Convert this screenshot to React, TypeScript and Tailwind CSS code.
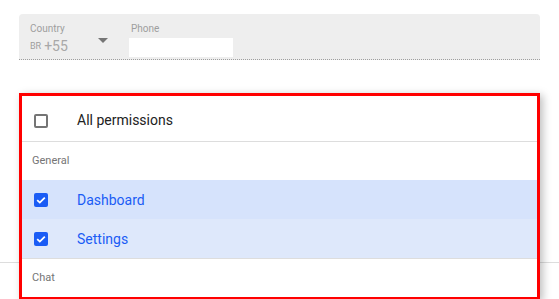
import React from 'react';

const CheckBox = ({ checked }: { checked: boolean }) =>
    checked ? (
        <span className="flex h-[14px] w-[14px] items-center justify-center rounded-[2px] bg-[#1a5cf5]">
            <svg viewBox="0 0 14 14" className="h-[14px] w-[14px]">
                <path d="M3.2 7.2 L5.8 9.6 L10.8 4.6" fill="none" stroke="#fff" strokeWidth="1.8" />
            </svg>
        </span>
    ) : (
        <span className="block h-[14px] w-[14px] rounded-[2px] border-2 border-[#757575] bg-white" />
    );

const Row = ({ label, checked, bg }: { label: string; checked: boolean; bg: string }) => (
    <div className={`flex h-[39px] items-center pt-[1px] ${bg}`}>
        <div className="ml-[12px]">
            <CheckBox checked={checked} />
        </div>
        <span className={`ml-[29px] text-[14px] ${checked ? 'text-[#1a5cf5]' : 'text-[#222]'}`}>{label}</span>
    </div>
);

export default function App() {
    return (
        <div className="relative h-[299px] w-[559px] overflow-hidden bg-white" style={{ fontFamily: 'Roboto, Arial, sans-serif' }}>
            <div className="px-[19px] pt-[14px]">
                <div className="flex h-[46px] rounded-t-[4px] border-b border-dotted border-[#9e9e9e] bg-[#eeeeee] pl-[11px]">
                    <div className="flex w-[99px] flex-col pt-[9px]">
                        <span className="text-[10px] leading-[12px] text-[#9e9e9e]">Country</span>
                        <div className="mt-[3px] flex items-center">
                            <span className="text-[9px] leading-[16px] text-[#9e9e9e]">BR</span>
                            <span className="ml-[3px] text-[14px] leading-[16px] text-[#a8a8a8]">+55</span>
                            <svg viewBox="0 0 10 5" className="ml-[30px] -mt-[12px] h-[5px] w-[10px]">
                                <path d="M0 0 L10 0 L5 5 Z" fill="#757575" />
                            </svg>
                        </div>
                    </div>
                    <div className="flex flex-col pt-[9px]">
                        <span className="ml-[2px] text-[10px] leading-[12px] text-[#9e9e9e]">Phone</span>
                        <div className="mt-[3px] h-[19px] w-[104px] bg-white" />
                    </div>
                </div>
            </div>
            <div className="mt-[202px] border-b border-[#dddddd]" />

            <div className="absolute left-[19px] top-[93px] w-[521px] border-[3px] border-[#ff0000] bg-white shadow-[3px_2px_8px_rgba(0,0,0,0.25)]">
                <div className="flex h-[46px] items-center border-b border-[#dddddd] pt-[4px]">
                    <div className="ml-[12px]">
                        <CheckBox checked={false} />
                    </div>
                    <span className="ml-[29px] text-[14px] text-[#222]">All permissions</span>
                </div>
                <div className="flex h-[38px] items-center pl-[10px] pt-[1px] text-[11px] text-[#757575]">General</div>
                <Row label="Dashboard" checked bg="bg-[#d6e3fc]" />
                <Row label="Settings" checked bg="bg-[#dee8fb]" />
                <div className="border-t border-[#dddddd]" />
                <div className="flex h-[38px] items-center pl-[10px] pt-[1px] text-[11px] text-[#757575]">Chat</div>
            </div>
        </div>
    );
}
